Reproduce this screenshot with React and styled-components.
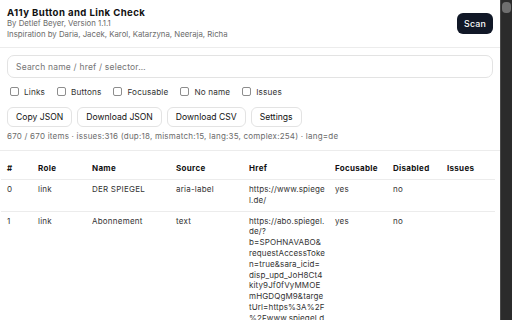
import { Fragment } from "react";
import styled, { createGlobalStyle } from "styled-components";

const GlobalStyle = createGlobalStyle`
  html, body {
    margin: 0;
    padding: 0;
    background: #fff;
  }
  body {
    font-family: Inter, "Noto Sans", sans-serif;
    color: #111827;
  }
`;

const Shell = styled.div`
  display: flex;
  height: 320px;
  overflow: hidden;
`;

const Main = styled.div`
  flex: 1;
  min-width: 0;
`;

const Header = styled.header`
  display: flex;
  align-items: center;
  justify-content: space-between;
  padding: 7px;
  border-bottom: 1px solid #ececec;
`;

const Titles = styled.div`
  display: flex;
  flex-direction: column;
`;

const Title = styled.h1`
  margin: 0;
  font-size: 9.6px;
  line-height: 11px;
  font-weight: 700;
  letter-spacing: 0.4px;
  color: #111;
`;

const Meta = styled.div`
  font-size: 7.8px;
  line-height: 11px;
  color: #6b6b6b;
`;

const ScanButton = styled.button`
  width: 36px;
  height: 21px;
  padding: 0;
  border: none;
  border-radius: 6px;
  background: #111827;
  color: #fff;
  font-family: inherit;
  font-size: 8.8px;
  font-weight: 500;
  letter-spacing: 0.2px;
`;

const Controls = styled.section`
  padding: 7px 7px 8px;
  border-bottom: 1px solid #ececec;
`;

const Search = styled.input`
  box-sizing: border-box;
  display: block;
  width: 100%;
  height: 23px;
  padding: 0 8px;
  border: 1px solid #e3e3e3;
  border-radius: 7px;
  font-family: inherit;
  font-size: 8.5px;
  letter-spacing: 0.2px;
  color: #111;
  outline: none;
  &::placeholder {
    color: #757575;
  }
`;

const FilterRow = styled.div`
  display: flex;
  align-items: center;
  gap: 12px;
  margin-top: 8px;
  padding-left: 3px;
  height: 11px;
`;

const Filter = styled.label`
  display: flex;
  align-items: center;
  gap: 5px;
  font-size: 8.2px;
  letter-spacing: 0.15px;
  color: #333;
`;

const Box = styled.input.attrs({ type: "checkbox" })`
  appearance: none;
  margin: 0;
  width: 9px;
  height: 9px;
  border: 1px solid #8d8d8d;
  border-radius: 2px;
  background: #fff;
`;

const ActionRow = styled.div`
  display: flex;
  gap: 5px;
  margin-top: 10px;
`;

const Action = styled.button`
  height: 20px;
  padding: 0 8px;
  border: 1px solid #e3e3e3;
  border-radius: 6px;
  background: #fff;
  color: #111;
  font-family: inherit;
  font-size: 8.6px;
`;

const Stats = styled.div`
  margin-top: 4px;
  font-size: 8px;
  line-height: 11px;
  letter-spacing: 0.22px;
  color: #6b6b6b;
`;

const Table = styled.table`
  width: 494px;
  margin: 7px 0 0 1px;
  border-collapse: collapse;
  table-layout: fixed;
`;

const Th = styled.th`
  padding: 5px 6px;
  text-align: left;
  font-size: 8px;
  line-height: 11px;
  font-weight: 700;
  letter-spacing: 0.3px;
  color: #111;
  border-bottom: 1px solid #ececec;
`;

const Td = styled.td`
  padding: 4px 3px 5px 6px;
  vertical-align: top;
  font-size: 8px;
  line-height: 10.8px;
  letter-spacing: 0.22px;
  color: #333;
  border-bottom: 1px solid #ececec;
  overflow-wrap: anywhere;
`;

const HrefCell = styled(Td)`
  padding-right: 0;
  letter-spacing: 0.12px;
`;

const Scrollbar = styled.div`
  width: 9px;
  flex: none;
  background: #2b2b2b;
  border-left: 1px solid #4a4a4a;
  padding: 2px 1px 0 1px;
`;

const Thumb = styled.div`
  height: 11px;
  border-radius: 4px;
  background: #6f6f6f;
`;

const filters = ["Links", "Buttons", "Focusable", "No name", "Issues"];
const actions = ["Copy JSON", "Download JSON", "Download CSV", "Settings"];
const columns = [
  ["#", 31],
  ["Role", 54],
  ["Name", 84],
  ["Source", 73],
  ["Href", 86],
  ["Focusable", 58],
  ["Disabled", 54],
  ["Issues", null],
];

// href split where the extension's column wraps it
const rows = [
  {
    role: "link",
    name: "DER SPIEGEL",
    source: "aria-label",
    href: ["https://www.spiege", "l.de/"],
    focusable: "yes",
    disabled: "no",
    issues: "",
  },
  {
    role: "link",
    name: "Abonnement",
    source: "text",
    href: [
      "https://abo.spiegel.",
      "de/?",
      "b=SPOHNAVABO&",
      "requestAccessToke",
      "n=true&sara_icid=",
      "disp_upd_JoH8Ct4",
      "kity9Jf0fVyMMOE",
      "mHGDQgM9&targe",
      "tUrl=https%3A%2F",
      "%2Fwww.spiegel.d",
      "e%2F",
    ],
    focusable: "yes",
    disabled: "no",
    issues: "",
  },
];

export default function App() {
  return (
    <>
      <GlobalStyle />
      <Shell>
        <Main>
          <Header>
            <Titles>
              <Title>A11y Button and Link Check</Title>
              <Meta>By Detlef Beyer, Version 1.1.1</Meta>
              <Meta>Inspiration by Daria, Jacek, Karol, Katarzyna, Neeraja, Richa</Meta>
            </Titles>
            <ScanButton>Scan</ScanButton>
          </Header>
          <Controls>
            <Search placeholder="Search name / href / selector…" />
            <FilterRow>
              {filters.map((f) => (
                <Filter key={f}>
                  <Box />
                  {f}
                </Filter>
              ))}
            </FilterRow>
            <ActionRow>
              {actions.map((a) => (
                <Action key={a}>{a}</Action>
              ))}
            </ActionRow>
            <Stats>
              670 / 670 items · issues:316 (dup:18, mismatch:15, lang:35, complex:254) · lang=de
            </Stats>
          </Controls>
          <Table>
            <colgroup>
              {columns.map(([c, w]) => (
                <col key={c} style={w ? { width: w } : undefined} />
              ))}
            </colgroup>
            <thead>
              <tr>
                {columns.map(([c]) => (
                  <Th key={c}>{c}</Th>
                ))}
              </tr>
            </thead>
            <tbody>
              {rows.map((r, i) => (
                <tr key={i}>
                  <Td>{i}</Td>
                  <Td>{r.role}</Td>
                  <Td>{r.name}</Td>
                  <Td>{r.source}</Td>
                  <HrefCell>
                    {r.href.map((part, j) => (
                      <Fragment key={j}>
                        {j > 0 && <wbr />}
                        {part}
                      </Fragment>
                    ))}
                  </HrefCell>
                  <Td>{r.focusable}</Td>
                  <Td>{r.disabled}</Td>
                  <Td>{r.issues}</Td>
                </tr>
              ))}
            </tbody>
          </Table>
        </Main>
        <Scrollbar>
          <Thumb />
        </Scrollbar>
      </Shell>
    </>
  );
}
